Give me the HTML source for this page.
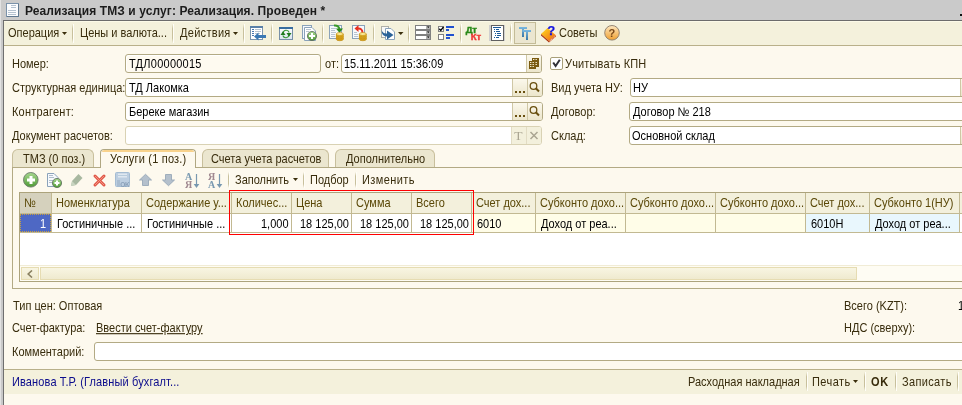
<!DOCTYPE html>
<html><head><meta charset="utf-8">
<style>
html,body{margin:0;padding:0;width:962px;height:405px;overflow:hidden;background:#fdf9ee;position:relative;font-family:"Liberation Sans",sans-serif;font-size:11px;}
.a{position:absolute;}
.t{position:absolute;white-space:nowrap;line-height:14px;color:#382c0c;font-size:11px;letter-spacing:0px;transform:scaleY(1.12);transform-origin:0 11px;will-change:transform;}
.k{color:#000;}
.sep{position:absolute;width:1px;background:linear-gradient(rgba(196,188,152,0),#c8c09c 25%,#c8c09c 75%,rgba(196,188,152,0));border-right:1px solid #fffef8;}
.fld{position:absolute;height:17px;border:1px solid #b3aa84;border-radius:3px;background:#fff;overflow:hidden;}
.btn{position:absolute;top:0;bottom:0;background:linear-gradient(#fbf8ec,#ece6cc);border-left:1px solid #cfc7a5;}
.hdr{position:absolute;top:193px;height:20px;background:#f3f0dc;border-left:1px solid #fff;}
.vl{position:absolute;width:1px;background:#c2b992;}
</style></head><body>

<!-- window left border -->
<div class="a" style="left:0;top:0;width:1px;height:405px;background:#e2e2e2"></div>
<div class="a" style="left:1px;top:0;width:2px;height:405px;background:#c9c9c9"></div>
<div class="a" style="left:3px;top:20px;width:1px;height:385px;background:#6f6f6f"></div>

<!-- title bar -->
<div class="a" style="left:1px;top:0;width:961px;height:20px;background:#cacaca"></div>
<div class="a" style="left:3px;top:20px;width:959px;height:1px;background:#6c6c6c"></div>
<svg class="a" style="left:0;top:0" width="22" height="20">
 <rect x="6.5" y="3.5" width="12" height="13" fill="#fbfcfe" stroke="#7a92aa"/>
 <path d="M7 16.5 H18.5 V4" fill="none" stroke="#5f7890"/>
 <g fill="#b4c2d0"><rect x="11" y="5" width="5" height="1"/><rect x="11" y="7" width="5" height="1"/><rect x="8" y="10" width="8" height="1"/><rect x="8" y="12" width="8" height="1"/><rect x="8" y="14" width="8" height="1"/></g>
</svg>
<div class="t" style="left:25px;top:4px;font-weight:bold;color:#1c1c1c;letter-spacing:0.1px;font-size:12px;transform:none">Реализация ТМЗ и услуг: Реализация. Проведен *</div>
<div class="a" style="left:960px;top:14px;width:2px;height:2px;background:#111"></div>

<!-- toolbar -->
<div class="a" style="left:4px;top:21px;width:958px;height:24px;background:#f4f1dc;border-top:1px solid #fcfae8;box-sizing:border-box"></div>
<div class="a" style="left:4px;top:45px;width:958px;height:1px;background:#b9b08a"></div>


<!-- toolbar items -->
<div class="t" style="left:8px;top:26px">Операция</div>
<svg class="a" style="left:62px;top:32px" width="5" height="3"><path d="M0 0h5l-2.5 3z" fill="#3a2e0c"/></svg>
<div class="sep" style="left:72px;top:24px;height:19px"></div>
<div class="t" style="left:80px;top:26px">Цены и валюта...</div>
<div class="sep" style="left:172px;top:24px;height:19px"></div>
<div class="t" style="left:180px;top:26px;letter-spacing:0.3px">Действия</div>
<svg class="a" style="left:233px;top:32px" width="5" height="3"><path d="M0 0h5l-2.5 3z" fill="#3a2e0c"/></svg>
<div class="sep" style="left:243px;top:24px;height:19px"></div>
<div class="sep" style="left:271px;top:24px;height:19px"></div>
<div class="sep" style="left:322px;top:24px;height:19px"></div>
<div class="sep" style="left:373px;top:24px;height:19px"></div>
<div class="sep" style="left:408px;top:24px;height:19px"></div>
<div class="sep" style="left:460px;top:24px;height:19px"></div>
<div class="sep" style="left:510px;top:24px;height:19px"></div>
<div class="t" style="left:559px;top:26px">Советы</div>

<!-- form rows -->
<div class="t" style="left:12px;top:57px">Номер:</div>
<div class="fld" style="left:125px;top:54px;width:194px;background:#fefaf0;box-shadow:inset 1px 1px 0 #fff"><div class="t k" style="left:3px;top:2px;letter-spacing:0.25px">ТДЛ00000015</div></div>
<div class="t" style="left:325px;top:57px">от:</div>
<div class="fld" style="left:341px;top:54px;width:199px"><div class="t k" style="left:2px;top:2px">15.11.2011 15:36:09</div><div class="btn" style="left:184px;width:15px"></div></div>
<div class="a" style="left:550px;top:57px;width:11px;height:11px;border:1px solid #a89f78;border-radius:2px;background:#fff"></div>
<div class="t" style="left:565px;top:57px;letter-spacing:0.15px">Учитывать КПН</div>

<div class="t" style="left:12px;top:81px">Структурная единица:</div>
<div class="fld" style="left:125px;top:78px;width:416px"><div class="t k" style="left:3px;top:2px">ТД Лакомка</div><div class="btn" style="left:386px;width:14px"></div><div class="btn" style="left:401px;width:15px"></div></div>
<div class="t" style="left:551px;top:81px">Вид учета НУ:</div>
<div class="fld" style="left:630px;top:78px;width:340px"><div class="t k" style="left:2px;top:2px">НУ</div><div class="btn" style="left:329px;width:14px"></div></div>

<div class="t" style="left:12px;top:105px;letter-spacing:0.2px">Контрагент:</div>
<div class="fld" style="left:125px;top:102px;width:416px"><div class="t k" style="left:3px;top:2px">Береке магазин</div><div class="btn" style="left:386px;width:14px"></div><div class="btn" style="left:401px;width:15px"></div></div>
<div class="t" style="left:551px;top:105px">Договор:</div>
<div class="fld" style="left:629px;top:102px;width:340px"><div class="t k" style="left:3px;top:2px">Договор № 218</div></div>

<div class="t" style="left:12px;top:129px">Документ расчетов:</div>
<div class="fld" style="left:125px;top:126px;width:415px;border-color:#d9d2b4"><div class="btn" style="left:385px;width:14px;background:#f3f0dc;border-color:#e2dcc4"></div><div class="btn" style="left:400px;width:15px;background:#f3f0dc;border-color:#e2dcc4"></div></div>
<div class="t" style="left:551px;top:129px">Склад:</div>
<div class="fld" style="left:629px;top:126px;width:340px"><div class="t k" style="left:2px;top:2px">Основной склад</div><div class="btn" style="left:330px;width:14px"></div></div>

<!-- tabs -->
<div class="a" style="left:12px;top:167px;width:950px;height:122px;border:1px solid #b3aa84;border-right:none;box-sizing:border-box;background:#fdf9ee"></div>
<div class="a" style="left:12px;top:149px;width:82px;height:18px;border:1px solid #c8bf9c;border-bottom:none;border-radius:6px 6px 0 0;box-sizing:border-box;background:#ebe6cf"></div>
<div class="t" style="left:23px;top:152px">ТМЗ (0 поз.)</div>
<div class="a" style="left:100px;top:149px;width:96px;height:19px;border:1px solid #b0a782;border-bottom:none;border-radius:4px 4px 0 0;box-sizing:border-box;background:#fdf9ee;overflow:hidden"><div class="a" style="left:1px;right:1px;top:0;height:2px;background:#f8d28c;border-radius:3px 3px 0 0"></div></div>
<div class="t" style="left:110px;top:152px;letter-spacing:0.2px">Услуги (1 поз.)</div>
<div class="a" style="left:202px;top:149px;width:127px;height:18px;border:1px solid #c8bf9c;border-bottom:none;border-radius:6px 6px 0 0;box-sizing:border-box;background:#ebe6cf"></div>
<div class="t" style="left:211px;top:152px">Счета учета расчетов</div>
<div class="a" style="left:335px;top:149px;width:100px;height:18px;border:1px solid #c8bf9c;border-bottom:none;border-radius:6px 6px 0 0;box-sizing:border-box;background:#ebe6cf"></div>
<div class="t" style="left:346px;top:152px">Дополнительно</div>

<!-- table toolbar -->
<div class="sep" style="left:228px;top:172px;height:16px"></div>
<div class="t" style="left:235px;top:173px">Заполнить</div>
<svg class="a" style="left:293px;top:178px" width="5" height="3"><path d="M0 0h5l-2.5 3z" fill="#3a2e0c"/></svg>
<div class="sep" style="left:303px;top:172px;height:16px"></div>
<div class="t" style="left:310px;top:173px">Подбор</div>
<div class="sep" style="left:355px;top:172px;height:16px"></div>
<div class="t" style="left:362px;top:173px;letter-spacing:0.4px">Изменить</div>

<!-- table -->
<div class="a" style="left:19px;top:192px;width:943px;height:90px;border:1px solid #aca37c;border-right:none;box-sizing:border-box;background:#fff"></div>

<div class="a" style="left:20px;top:193px;width:31px;height:20px;background:#d5d1bd"></div>
<div class="a" style="left:20px;top:214px;width:31px;height:18px;background:#4e68c4"></div>
<div class="a" style="left:52px;top:193px;width:89px;height:20px;background:#f3f0dc"></div>
<div class="a" style="left:52px;top:214px;width:89px;height:18px;background:#fff"></div>
<div class="a" style="left:142px;top:193px;width:89px;height:20px;background:#f3f0dc"></div>
<div class="a" style="left:142px;top:214px;width:89px;height:18px;background:#fff"></div>
<div class="a" style="left:232px;top:193px;width:59px;height:20px;background:#f3f0dc"></div>
<div class="a" style="left:232px;top:214px;width:59px;height:18px;background:#fff"></div>
<div class="a" style="left:292px;top:193px;width:59px;height:20px;background:#f3f0dc"></div>
<div class="a" style="left:292px;top:214px;width:59px;height:18px;background:#fff"></div>
<div class="a" style="left:352px;top:193px;width:59px;height:20px;background:#f3f0dc"></div>
<div class="a" style="left:352px;top:214px;width:59px;height:18px;background:#fff"></div>
<div class="a" style="left:412px;top:193px;width:59px;height:20px;background:#f3f0dc"></div>
<div class="a" style="left:412px;top:214px;width:59px;height:18px;background:#fff"></div>
<div class="a" style="left:472px;top:193px;width:63px;height:20px;background:#f3f0dc"></div>
<div class="a" style="left:472px;top:214px;width:63px;height:18px;background:#fffde8"></div>
<div class="a" style="left:536px;top:193px;width:89px;height:20px;background:#f3f0dc"></div>
<div class="a" style="left:536px;top:214px;width:89px;height:18px;background:#fffde8"></div>
<div class="a" style="left:626px;top:193px;width:89px;height:20px;background:#f3f0dc"></div>
<div class="a" style="left:626px;top:214px;width:89px;height:18px;background:#fffde8"></div>
<div class="a" style="left:716px;top:193px;width:89px;height:20px;background:#f3f0dc"></div>
<div class="a" style="left:716px;top:214px;width:89px;height:18px;background:#fffde8"></div>
<div class="a" style="left:806px;top:193px;width:63px;height:20px;background:#f3f0dc"></div>
<div class="a" style="left:806px;top:214px;width:63px;height:18px;background:#e9f7fd"></div>
<div class="a" style="left:870px;top:193px;width:89px;height:20px;background:#f3f0dc"></div>
<div class="a" style="left:870px;top:214px;width:89px;height:18px;background:#e9f7fd"></div>
<div class="a" style="left:960px;top:193px;width:89px;height:20px;background:#f3f0dc"></div>
<div class="a" style="left:960px;top:214px;width:89px;height:18px;background:#fff"></div>
<div class="a" style="left:20px;top:213px;width:942px;height:1px;background:#c2b992"></div>
<div class="a" style="left:20px;top:232px;width:942px;height:1px;background:#c2b992"></div>
<div class="vl" style="left:51px;top:193px;height:40px"></div>
<div class="vl" style="left:141px;top:193px;height:40px"></div>
<div class="vl" style="left:231px;top:193px;height:40px"></div>
<div class="vl" style="left:291px;top:193px;height:40px"></div>
<div class="vl" style="left:351px;top:193px;height:40px"></div>
<div class="vl" style="left:411px;top:193px;height:40px"></div>
<div class="vl" style="left:471px;top:193px;height:40px"></div>
<div class="vl" style="left:535px;top:193px;height:40px"></div>
<div class="vl" style="left:625px;top:193px;height:40px"></div>
<div class="vl" style="left:715px;top:193px;height:40px"></div>
<div class="vl" style="left:805px;top:193px;height:40px"></div>
<div class="vl" style="left:869px;top:193px;height:40px"></div>
<div class="vl" style="left:959px;top:193px;height:40px"></div>
<div class="t" style="left:24px;top:196px;color:#5a4808">№</div>
<div class="t" style="right:916px;top:217px;color:#fff">1</div>
<div class="t" style="left:56px;top:196px;color:#5a4808">Номенклатура</div>
<div class="t" style="left:57px;top:217px;color:#000">Гостиничные ...</div>
<div class="t" style="left:146px;top:196px;color:#5a4808">Содержание у...</div>
<div class="t" style="left:147px;top:217px;color:#000">Гостиничные ...</div>
<div class="t" style="left:236px;top:196px;color:#5a4808">Количес...</div>
<div class="t" style="right:673px;top:217px;color:#000">1,000</div>
<div class="t" style="left:296px;top:196px;color:#5a4808">Цена</div>
<div class="t" style="right:613px;top:217px;color:#000">18 125,00</div>
<div class="t" style="left:356px;top:196px;color:#5a4808">Сумма</div>
<div class="t" style="right:553px;top:217px;color:#000">18 125,00</div>
<div class="t" style="left:416px;top:196px;color:#5a4808">Всего</div>
<div class="t" style="right:493px;top:217px;color:#000">18 125,00</div>
<div class="t" style="left:476px;top:196px;color:#5a4808">Счет дох...</div>
<div class="t" style="left:477px;top:217px;color:#000">6010</div>
<div class="t" style="left:540px;top:196px;color:#5a4808">Субконто дохо...</div>
<div class="t" style="left:541px;top:217px;color:#000">Доход от реа...</div>
<div class="t" style="left:630px;top:196px;color:#5a4808">Субконто дохо...</div>
<div class="t" style="left:720px;top:196px;color:#5a4808">Субконто дохо...</div>
<div class="t" style="left:810px;top:196px;color:#5a4808">Счет дох...</div>
<div class="t" style="left:811px;top:217px;color:#000">6010Н</div>
<div class="t" style="left:874px;top:196px;color:#5a4808">Субконто 1(НУ)</div>
<div class="t" style="left:875px;top:217px;color:#000">Доход от реа...</div>
<div class="a" style="left:20px;top:214px;width:31px;height:18px;box-sizing:border-box;border:1px dotted #c8a040"></div>
<div class="a" style="left:229px;top:190px;width:245px;height:45px;box-sizing:border-box;border:1px solid #ff0000"></div>
<div class="a" style="left:20px;top:265px;width:942px;height:16px;background:#fefcf3;border-top:1px solid #f1ecd6;box-sizing:border-box"></div>
<div class="a" style="left:21px;top:267px;width:18px;height:13px;box-sizing:border-box;border:1px solid #e6dcb2;background:linear-gradient(#f8f5e2,#efeacf)"></div>
<svg class="a" style="left:27px;top:270px" width="6" height="8"><path d="M5 0.5L1.2 4 5 7.5" fill="none" stroke="#8a8060" stroke-width="1.6"/></svg>
<div class="a" style="left:40px;top:267px;width:817px;height:13px;box-sizing:border-box;border:1px solid #e6dcb2;background:linear-gradient(#f8f5e2,#efeacf)"></div>
<div class="t" style="left:13px;top:299px">Тип цен: Оптовая</div>
<div class="t" style="left:12px;top:321px;letter-spacing:-0.05px">Счет-фактура:</div>
<div class="t" style="left:96px;top:321px;text-decoration:underline">Ввести счет-фактуру</div>
<div class="t" style="left:12px;top:345px">Комментарий:</div>
<div class="fld" style="left:94px;top:342px;width:880px"></div>
<div class="t" style="left:844px;top:299px">Всего (KZT):</div>
<div class="t k" style="left:958px;top:299px">1</div>
<div class="t" style="left:844px;top:321px">НДС (сверху):</div>
<div class="a" style="left:4px;top:369px;width:958px;height:1px;background:#b9b08a"></div>
<div class="a" style="left:4px;top:370px;width:958px;height:24px;background:#f4f1dc"></div>
<div class="t" style="left:12px;top:375px;color:#0c0c8c;letter-spacing:0.12px">Иванова Т.Р. (Главный бухгалт...</div>
<div class="t" style="left:688px;top:375px">Расходная накладная</div>
<div class="sep" style="left:806px;top:372px;height:19px"></div>
<div class="t" style="left:812px;top:375px;letter-spacing:0.45px">Печать</div>
<svg class="a" style="left:853px;top:380px" width="5" height="3"><path d="M0 0h5l-2.5 3z" fill="#3a2e0c"/></svg>
<div class="sep" style="left:864px;top:372px;height:19px"></div>
<div class="t" style="left:871px;top:375px;font-weight:bold;letter-spacing:0.8px">OK</div>
<div class="sep" style="left:895px;top:372px;height:19px"></div>
<div class="t" style="left:902px;top:375px;letter-spacing:0.35px">Записать</div>
<div class="sep" style="left:957px;top:372px;height:19px"></div>
<svg class="a" style="left:0;top:0" width="962" height="405" viewBox="0 0 962 405">
<defs>
 <linearGradient id="gG" x1="0" y1="0" x2="0" y2="1"><stop offset="0" stop-color="#a8d890"/><stop offset="1" stop-color="#4e9a34"/></linearGradient>
 <linearGradient id="gO" x1="0" y1="0" x2="0" y2="1"><stop offset="0" stop-color="#fde7c0"/><stop offset="1" stop-color="#f0a030"/></linearGradient>
 <linearGradient id="gB" x1="0" y1="0" x2="1" y2="1"><stop offset="0" stop-color="#ffe020"/><stop offset="1" stop-color="#f06010"/></linearGradient>
 <linearGradient id="gC" x1="0" y1="0" x2="0" y2="1"><stop offset="0" stop-color="#fff2a0"/><stop offset="1" stop-color="#d89a10"/></linearGradient>
 <linearGradient id="gT" x1="0" y1="0" x2="0" y2="1"><stop offset="0" stop-color="#7ab8e0"/><stop offset="1" stop-color="#3a78a8"/></linearGradient>
 <linearGradient id="gW" x1="0" y1="0" x2="0" y2="1"><stop offset="0" stop-color="#ffffff"/><stop offset="1" stop-color="#d8e4ee"/></linearGradient>
</defs>
<!-- icon1: doc with arrow left -->
<rect x="250.5" y="26.5" width="12" height="13" fill="#fff" stroke="#7a94ae"/>
<rect x="250" y="26" width="13" height="2" fill="#5a80a8"/>
<g fill="#4a78b0"><rect x="252" y="29" width="2" height="1"/><rect x="252" y="31" width="2" height="1"/><rect x="252" y="33" width="2" height="1"/><rect x="252" y="35" width="2" height="1"/></g>
<g fill="#b8c4d0"><rect x="255" y="29" width="6" height="1"/><rect x="255" y="31" width="6" height="1"/><rect x="255" y="33" width="5" height="1"/></g>
<path d="M254 36.5 L258.5 32.5 V35 H266 V38 H258.5 V40.5 Z" fill="#3a78b4"/>
<!-- icon2: refresh window -->
<rect x="279.5" y="27.5" width="13" height="12" fill="url(#gW)" stroke="#7890a8"/>
<rect x="279" y="27" width="14" height="2" fill="#3a6ea0"/>
<path d="M283 33 A3.2 3.2 0 0 1 289.2 32.5" fill="none" stroke="#3a9a3a" stroke-width="1.1"/>
<path d="M289 35 A3.2 3.2 0 0 1 282.8 35.5" fill="none" stroke="#3a9a3a" stroke-width="1.1"/>
<path d="M280.5 35 L283 31.2 L285.5 35 Z" fill="#1e7a1e"/><path d="M286.5 33 L289 36.8 L291.5 33 Z" fill="#1e7a1e"/>
<!-- icon3: copy + plus -->
<rect x="302.5" y="25.5" width="9" height="13" fill="#f4f8fc" stroke="#8aa2ba"/>
<path d="M304.5 27.5 H312 L315.5 31 V40.5 H304.5 Z" fill="#fff" stroke="#8aa2ba"/>
<rect x="306" y="29" width="5" height="1" fill="#b8c4d0"/><rect x="306" y="31" width="3" height="1" fill="#b8c4d0"/>
<circle cx="312" cy="36" r="4.6" fill="url(#gG)" stroke="#5a6a5a" stroke-width="0.8"/>
<rect x="309" y="35" width="6" height="2" fill="#fff"/><rect x="311" y="33" width="2" height="6" fill="#fff"/>
<!-- icon4: doc + green arrow + coins -->
<rect x="329.5" y="25.5" width="12" height="13" fill="#f6f9fc" stroke="#8aa2ba"/>
<g fill="#b8c4d0"><rect x="331" y="28" width="5" height="1"/><rect x="331" y="30" width="4" height="1"/><rect x="331" y="32" width="5" height="1"/><rect x="331" y="34" width="4" height="1"/><rect x="331" y="36" width="4" height="1"/></g>
<path d="M334 25.5 Q338.5 25 339.5 29" fill="none" stroke="#3a9a2a" stroke-width="2"/>
<path d="M336 28.5 H343 L339.5 33 Z" fill="#2a8a1a"/>
<g stroke="#c08a10" stroke-width="0.7"><path d="M336.3 38 v1.3 a3.5 1.4 0 0 0 7 0 v-1.3" fill="#e0a818"/><ellipse cx="339.8" cy="38" rx="3.5" ry="1.4" fill="#f4cc38"/>
<path d="M336.3 36 v1.3 a3.5 1.4 0 0 0 7 0 v-1.3" fill="#e0a818"/><ellipse cx="339.8" cy="36" rx="3.5" ry="1.4" fill="#f8d848"/>
<path d="M336.3 34 v1.3 a3.5 1.4 0 0 0 7 0 v-1.3" fill="#e8b820"/><ellipse cx="339.8" cy="34" rx="3.5" ry="1.4" fill="#fff0a0"/></g>
<!-- icon5: doc + red arrow + coins -->
<rect x="352.5" y="25.5" width="12" height="13" fill="#f6f9fc" stroke="#8aa2ba"/>
<g fill="#b8c4d0"><rect x="354" y="32" width="3" height="1"/><rect x="354" y="34" width="4" height="1"/><rect x="354" y="36" width="4" height="1"/></g>
<path d="M357.5 28.5 Q362.5 28 362.5 33" fill="none" stroke="#e83020" stroke-width="2"/>
<path d="M354.5 28.5 L358.5 25 V32 Z" fill="#e83020"/>
<g stroke="#c08a10" stroke-width="0.7"><path d="M359.3 38 v1.3 a3.5 1.4 0 0 0 7 0 v-1.3" fill="#e0a818"/><ellipse cx="362.8" cy="38" rx="3.5" ry="1.4" fill="#f4cc38"/>
<path d="M359.3 36 v1.3 a3.5 1.4 0 0 0 7 0 v-1.3" fill="#e0a818"/><ellipse cx="362.8" cy="36" rx="3.5" ry="1.4" fill="#f8d848"/>
<path d="M359.3 34 v1.3 a3.5 1.4 0 0 0 7 0 v-1.3" fill="#e8b820"/><ellipse cx="362.8" cy="34" rx="3.5" ry="1.4" fill="#fff0a0"/></g>
<!-- icon6: docs + blue arrow -->
<rect x="381.5" y="26.5" width="7" height="11" fill="#f8f8f8" stroke="#b0b0a8"/>
<path d="M385.5 28.5 H391 L394.5 32 V39.5 H385.5 Z" fill="#fff" stroke="#8aa2ba"/>
<path d="M381.5 29.5 Q382.5 34 387 33.5 V30.5 L393.5 35 L387 39.5 V36.5 Q381.5 36.5 381.5 29.5 Z" fill="#2a6298"/>
<path d="M398 32h5.5l-2.75 3z" fill="#3a2e0c"/>
<!-- icon7: form fields -->
<g>
<rect x="415.5" y="25.5" width="15" height="4" fill="#fff" stroke="#808080"/><rect x="426" y="26" width="4" height="3" fill="#b0b0b0"/>
<rect x="415.5" y="30.5" width="15" height="4" fill="#fff" stroke="#808080"/><rect x="426" y="31" width="4" height="3" fill="#b0b0b0"/>
<rect x="415.5" y="35.5" width="15" height="4" fill="#fff" stroke="#808080"/><rect x="426" y="36" width="4" height="3" fill="#b0b0b0"/>
<path d="M427 26.5h2.5l-1.25 1.5z M427 31.5h2.5l-1.25 1.5z M427 36.5h2.5l-1.25 1.5z" fill="#000"/>
</g>
<!-- icon8: checkboxes + lines -->
<rect x="438.5" y="26.5" width="5" height="5" fill="#fff" stroke="#808080"/>
<path d="M439.3 28.8 L440.8 30.5 L443.5 26.8" fill="none" stroke="#000" stroke-width="1.3"/>
<rect x="438.5" y="34.5" width="5" height="5" fill="#fff" stroke="#808080"/>
<g fill="#2050d0"><rect x="446" y="26" width="8" height="2"/><rect x="446" y="29" width="3" height="2"/><rect x="446" y="34" width="8" height="2"/><rect x="446" y="37" width="4" height="2"/></g>
<!-- icon9: Dt Kt -->
<text x="465.8" y="33" font-family="Liberation Sans" font-weight="bold" font-size="9.5" fill="#2a8a1a" stroke="#2a8a1a" stroke-width="0.45" letter-spacing="-0.2">Дт</text>
<text x="470.8" y="40.2" font-family="Liberation Sans" font-weight="bold" font-size="9.5" fill="#f03838" stroke="#f03838" stroke-width="0.45" letter-spacing="-0.2">Кт</text>
<!-- icon10: journal -->
<rect x="489" y="25" width="16" height="16" fill="#d0d0d0"/>
<rect x="491.5" y="25.5" width="12" height="15" fill="#fff" stroke="#606060"/>
<g fill="#1a5a9a"><rect x="493" y="27" width="8" height="1"/><rect x="494" y="29" width="1" height="1"/><rect x="496" y="29" width="3" height="1"/><rect x="494" y="31" width="1" height="1"/><rect x="496" y="31" width="4" height="1"/><rect x="495" y="33" width="1" height="1"/><rect x="497" y="33" width="4" height="1"/><rect x="495" y="35" width="1" height="1"/><rect x="497" y="35" width="4" height="1"/><rect x="494" y="37" width="1" height="1"/><rect x="496" y="37" width="3" height="1"/></g>
<!-- pressed button + Tt -->
<rect x="514.5" y="22.5" width="21" height="21" fill="#ebe6d0" stroke="#c4bc98"/>
<path d="M519 27 H527 V29 H524 V37 H522 V29 H519 Z" fill="url(#gT)"/>
<path d="M522.5 30 H531 V32 H528 V40 H526 V32 H522.5 Z" fill="url(#gT)"/>
<!-- book with ? -->
<path d="M541 34 L547.5 28 L555.5 35 L549 41 Z" fill="url(#gB)"/>
<path d="M541 34 L549 41 L549 42.5 L541 35.5 Z" fill="#a8300c"/>
<path d="M549 41 L555.5 35 L556 36.5 L549 42.5 Z" fill="#c84818"/>
<path d="M549.8 41.2 L555.2 36.4" stroke="#fff" stroke-width="0.9" stroke-dasharray="1 0.9"/>
<text x="547.3" y="34.6" font-family="Liberation Sans" font-weight="bold" font-size="13" fill="#1414e0" stroke="#1414e0" stroke-width="0.25">?</text>
<!-- help -->
<circle cx="612" cy="32.8" r="7.3" fill="url(#gO)" stroke="#8a7a6a" stroke-width="0.9"/>
<text x="608.6" y="37.3" font-family="Liberation Sans" font-weight="bold" font-size="11" fill="#7a4818">?</text>

<!-- calendar button icon -->
<g fill="#7a5a10">
<rect x="532" y="58" width="7" height="9"/><rect x="529" y="61" width="7" height="8"/>
</g>
<g fill="#f3ecd0">
<rect x="533" y="59" width="1.4" height="1"/><rect x="535.5" y="59" width="1.4" height="1"/>
<rect x="530" y="62" width="1.4" height="1"/><rect x="532.5" y="62" width="1.4" height="1"/><rect x="535.5" y="62" width="1.4" height="1"/>
<rect x="530" y="64" width="1.4" height="1"/><rect x="532.5" y="64" width="1.4" height="1"/><rect x="535.5" y="64" width="1.4" height="1"/>
<rect x="530" y="66" width="1.4" height="1"/><rect x="532.5" y="66" width="1.4" height="1"/>
</g>
<!-- checkbox check -->
<path d="M553.2 62.5 L555.6 66 L559.8 59.8" fill="none" stroke="#303038" stroke-width="2"/>
<!-- ... and search, row2 & row3 -->
<g fill="#6a5010">
<rect x="515" y="91" width="2" height="2"/><rect x="519" y="91" width="2" height="2"/><rect x="523" y="91" width="2" height="2"/>
<rect x="515" y="115" width="2" height="2"/><rect x="519" y="115" width="2" height="2"/><rect x="523" y="115" width="2" height="2"/>
</g>
<g fill="none" stroke="#6a5010" stroke-width="1.3">
<circle cx="533.5" cy="86" r="3.3"/><circle cx="533.5" cy="110" r="3.3"/>
</g>
<g stroke="#6a5010" stroke-width="2"><path d="M535.8 88.3 L539 91.5"/><path d="M535.8 112.3 L539 115.5"/></g>
<!-- T x row4 -->
<text x="514.3" y="140.3" font-family="Liberation Serif" font-size="13.5" fill="#aaa592">T</text>
<path d="M530.5 132 L537.5 139 M537.5 132 L530.5 139" stroke="#aaa592" stroke-width="1.5"/>

<!-- table toolbar icons -->
<circle cx="30.8" cy="179.8" r="7.3" fill="url(#gG)" stroke="#6a786a" stroke-width="0.9"/>
<rect x="27" y="178.5" width="8" height="3" fill="#fff"/><rect x="29.5" y="176" width="3" height="8" fill="#fff"/>
<path d="M47.5 173.5 H54 L58 177.5 V186.5 H47.5 Z" fill="#f6f9fc" stroke="#8aa2ba"/>
<g fill="#b0bccc"><rect x="49" y="175" width="4" height="1"/><rect x="49" y="177" width="5" height="1"/><rect x="49" y="180" width="4" height="1"/><rect x="49" y="182" width="3" height="1"/></g>
<circle cx="57" cy="183" r="4.6" fill="url(#gG)" stroke="#5a6a5a" stroke-width="0.8"/>
<rect x="54.5" y="182" width="5" height="2" fill="#fff"/><rect x="56" y="180.5" width="2" height="5" fill="#fff"/>
<path d="M71 186 L72 181 L78.5 174 L82.5 178 L76 185 Z" fill="#a8b8a0"/>
<path d="M71 186 L72 181 L76 185 Z" fill="#c8d4c0"/>
<path d="M95 176 L104 185 M104 176 L95 185" stroke="#e05848" stroke-width="3" stroke-linecap="round"/>
<path d="M95 176 L104 185 M104 176 L95 185" stroke="#f49080" stroke-width="1"/>
<rect x="115.5" y="172.5" width="14" height="14" rx="1" fill="#bccee0" stroke="#a4bcd2"/>
<rect x="118" y="173.5" width="9" height="4" fill="#dfe8f0"/><rect x="118" y="175" width="9" height="1" fill="#b8ccdc"/>
<rect x="117" y="180" width="3" height="6" fill="#a8bcd0"/>
<text x="120.3" y="186.5" font-family="Liberation Sans" font-weight="bold" font-size="6.5" fill="#8aa0b8" letter-spacing="-0.3">OK</text>
<path d="M139.5 180 L145.5 174.3 L151.5 180 H148.5 V185.5 H142.5 V180 Z" fill="#b4c0cc" stroke="#98a8b8" stroke-width="0.9"/>
<path d="M162.5 180 L168.5 185.7 L174.5 180 H171.5 V174.5 H165.5 V180 Z" fill="#b4c0cc" stroke="#98a8b8" stroke-width="0.9"/>
<text x="185" y="179.8" font-family="Liberation Serif" font-weight="bold" font-size="10" fill="#7898b0">A</text>
<text x="185" y="187.8" font-family="Liberation Serif" font-weight="bold" font-size="10" fill="#a08890">Я</text>
<path d="M196.5 174 V186" stroke="#7898b0" stroke-width="1.2"/><path d="M193.7 184 H199.3 L196.5 188 Z" fill="#7898b0"/>
<text x="208" y="179.8" font-family="Liberation Serif" font-weight="bold" font-size="10" fill="#a08890">Я</text>
<text x="208" y="187.8" font-family="Liberation Serif" font-weight="bold" font-size="10" fill="#7898b0">A</text>
<path d="M219.5 174 V186" stroke="#7898b0" stroke-width="1.2"/><path d="M216.7 184 H222.3 L219.5 188 Z" fill="#7898b0"/>
</svg>

</body></html>
